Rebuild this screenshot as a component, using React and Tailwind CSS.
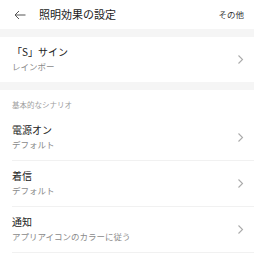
import React from "react";

const font = { fontFamily: '"Noto Sans CJK JP", "Noto Sans", sans-serif' };

function Chevron() {
  return (
    <svg width="7" height="11" viewBox="0 0 7 11" className="shrink-0">
      <path d="M1.5 1.5 L5.5 5.5 L1.5 9.5" fill="none" stroke="#ababab" strokeWidth="1.1" />
    </svg>
  );
}

function Row({ title, sub, divider = true }) {
  return (
    <div className="flex flex-col pl-3">
      <div className="flex h-[45px] items-center pr-[10px]">
        <div className="flex flex-1 flex-col">
          <div className="text-[10px] leading-[14px] text-[#222]">{title}</div>
          <div className="text-[8.5px] leading-[15px] text-[#8a8a8a]">{sub}</div>
        </div>
        <Chevron />
      </div>
      {divider && <div className="h-px bg-[#f1f1f1]" />}
    </div>
  );
}

export default function App() {
  return (
    <div className="h-[254px] w-[254px] overflow-hidden bg-white" style={font}>
      <div className="flex h-[29px] items-center pl-[14px] pr-[10px]">
        <svg width="12" height="10" viewBox="0 0 12 10" className="shrink-0">
          <path d="M11.5 5 H1 M5 1 L1 5 L5 9" fill="none" stroke="#555" strokeWidth="1" />
        </svg>
        <div className="ml-[13px] flex-1 text-[11px] leading-none text-[#222]">照明効果の設定</div>
        <div className="text-[8.5px] leading-none text-[#333]">その他</div>
      </div>
      <div className="h-[8px] bg-[#f5f5f5]" />
      <Row title="「S」サイン" sub="レインボー" divider={false} />
      <div className="h-[8px] bg-[#f5f5f5]" />
      <div className="flex h-[25px] items-end pb-[4px] pl-3 text-[7.5px] leading-[12px] text-[#a0a0a0]">
        基本的なシナリオ
      </div>
      <Row title="電源オン" sub="デフォルト" />
      <Row title="着信" sub="デフォルト" />
      <Row title="通知" sub="アプリアイコンのカラーに従う" />
    </div>
  );
}
